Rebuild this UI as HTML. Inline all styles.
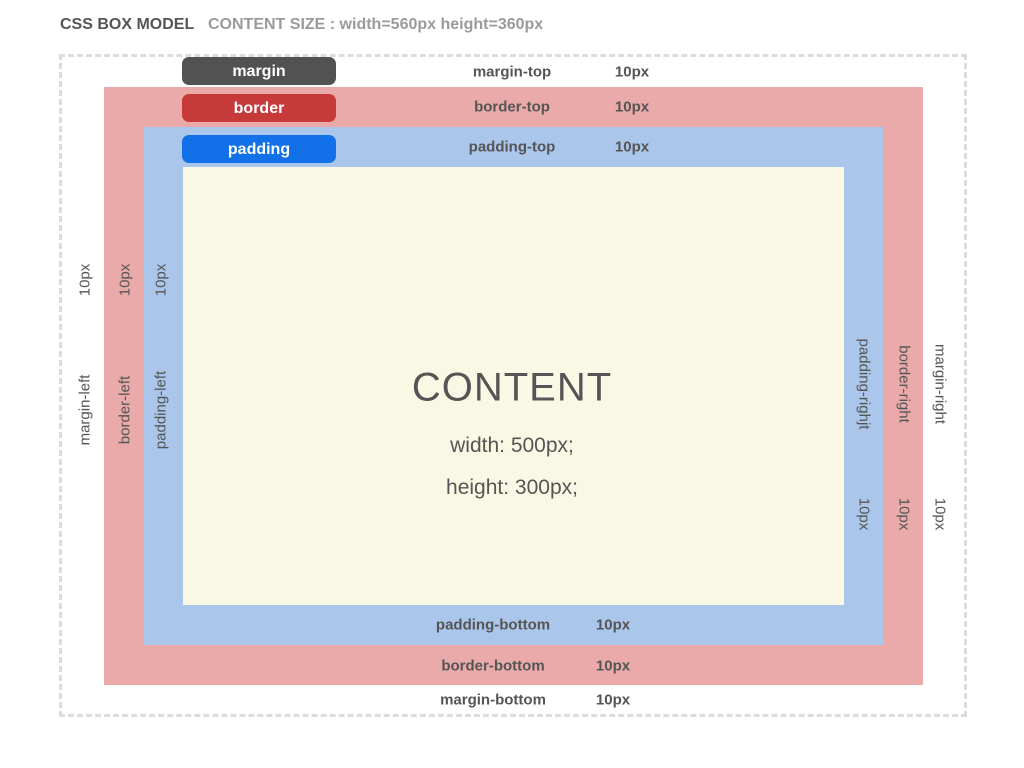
<!DOCTYPE html>
<html><head><style>
*{margin:0;padding:0;box-sizing:border-box}
body{width:1024px;height:768px;background:#fff;position:relative;font-family:"Liberation Sans","DejaVu Sans",sans-serif;color:#555;overflow:hidden}
.a{position:absolute;white-space:nowrap}
.t{font-size:15px;font-weight:bold;color:#555;transform:translate(-50%,-50%)}
.n{font-weight:normal}
.r{transform:translate(-50%,-50%) rotate(90deg)}
.l{transform:translate(-50%,-50%) rotate(-90deg)}
.pill{position:absolute;left:182px;width:154px;height:28px;border-radius:7px;color:#fff;font-weight:bold;font-size:16px;text-align:center;line-height:30px}
</style></head><body>
<div class="a" style="left:60px;top:16px;font-size:16px;font-weight:bold;color:#555">CSS BOX MODEL</div>
<div class="a" style="left:208px;top:16px;font-size:16px;font-weight:bold;color:#9a9a9a">CONTENT SIZE : width=560px height=360px</div>
<div class="a" style="left:59px;top:54px;width:908px;height:663px;border:3px dashed #dcdcdc"></div>
<div class="a" style="left:104px;top:87px;width:819px;height:598px;background:#eaaaaa"></div>
<div class="a" style="left:144px;top:127px;width:739px;height:518px;background:#abc6eb"></div>
<div class="a" style="left:183px;top:167px;width:661px;height:438px;background:#f9f8e4"></div>
<div class="pill" style="top:57px;background:#525252">margin</div>
<div class="pill" style="top:94px;background:#c63a3a">border</div>
<div class="pill" style="top:135px;background:#1271e8">padding</div>
<div class="a t" style="left:512px;top:72px">margin-top</div><div class="a t" style="left:632px;top:72px">10px</div>
<div class="a t" style="left:512px;top:107px">border-top</div><div class="a t" style="left:632px;top:107px">10px</div>
<div class="a t" style="left:512px;top:147px">padding-top</div><div class="a t" style="left:632px;top:147px">10px</div>
<div class="a t" style="left:493px;top:625px">padding-bottom</div><div class="a t" style="left:613px;top:625px">10px</div>
<div class="a t" style="left:493px;top:666px">border-bottom</div><div class="a t" style="left:613px;top:666px">10px</div>
<div class="a t" style="left:493px;top:700px">margin-bottom</div><div class="a t" style="left:613px;top:700px">10px</div>
<div class="a t l n" style="left:85px;top:410px">margin-left</div><div class="a t l n" style="left:85px;top:280px">10px</div>
<div class="a t l n" style="left:125px;top:410px">border-left</div><div class="a t l n" style="left:125px;top:280px">10px</div>
<div class="a t l n" style="left:161px;top:410px">padding-left</div><div class="a t l n" style="left:161px;top:280px">10px</div>
<div class="a t r n" style="left:864px;top:384px">padding-righjt</div><div class="a t r n" style="left:864px;top:514px">10px</div>
<div class="a t r n" style="left:904px;top:384px">border-right</div><div class="a t r n" style="left:904px;top:514px">10px</div>
<div class="a t r n" style="left:940px;top:384px">margin-right</div><div class="a t r n" style="left:940px;top:514px">10px</div>
<div class="a t n" style="left:512px;top:388px;font-size:40px;letter-spacing:1px">CONTENT</div>
<div class="a t n" style="left:512px;top:446px;font-size:21px">width: 500px;</div>
<div class="a t n" style="left:512px;top:488px;font-size:21px">height: 300px;</div>
</body></html>
